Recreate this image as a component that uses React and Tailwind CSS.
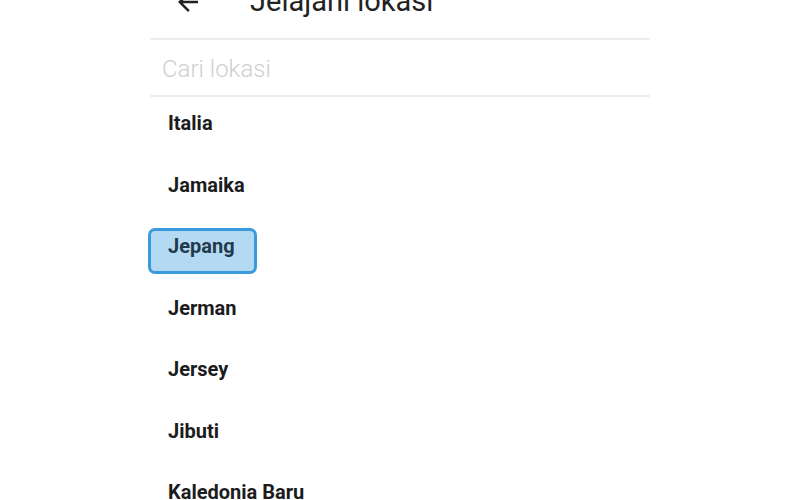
import React from 'react';

const locations = ['Italia', 'Jamaika', 'Jepang', 'Jerman', 'Jersey', 'Jibuti', 'Kaledonia Baru'];

const BackArrow = () => (
  <svg width="30" height="30" viewBox="0 0 24 24" className="shrink-0">
    <path fill="#222" d="M20 11H7.83l5.59-5.59L12 4l-8 8 8 8 1.41-1.41L7.83 13H20v-2z" />
  </svg>
);

export default function App() {
  return (
    <div className="w-full h-[500px] overflow-hidden bg-white font-['Roboto','Liberation_Sans',sans-serif]">
      <div className="w-[500px] mx-auto">
        {/* header, mostly scrolled off the top */}
        <div className="h-[38px] flex flex-col">
          <div className="flex items-center -mt-[13px] h-[29px]">
            <div className="w-[23px]" />
            <BackArrow />
            <h1 className="ml-[47px] text-[29px] leading-[29px] text-[#222]">Jelajahi lokasi</h1>
          </div>
        </div>
        <div className="h-[2px] bg-[#ededed]" />

        <div className="h-[55px] flex items-center pl-[12px] pt-[2px]">
          <span className="text-[24px] font-light text-[#cfcfcf]">Cari lokasi</span>
        </div>
        <div className="h-[2px] bg-[#ededed]" />

        <ul>
          {locations.map((name) => (
            <li key={name} className="relative h-[61.5px] pt-[14px] pl-[18px]">
              {name === 'Jepang' && (
                <div className="absolute left-[-2px] top-[8px] w-[109px] h-[46px] rounded-[7px] border-[3px] border-[#3a9bdc] bg-[#b4daf3]" />
              )}
              <span
                className={
                  'relative text-[20px] leading-6 font-bold ' +
                  (name === 'Jepang' ? 'text-[#233a4d]' : 'text-[#1c1c1c]')
                }
              >
                {name}
              </span>
            </li>
          ))}
        </ul>
      </div>
    </div>
  );
}
